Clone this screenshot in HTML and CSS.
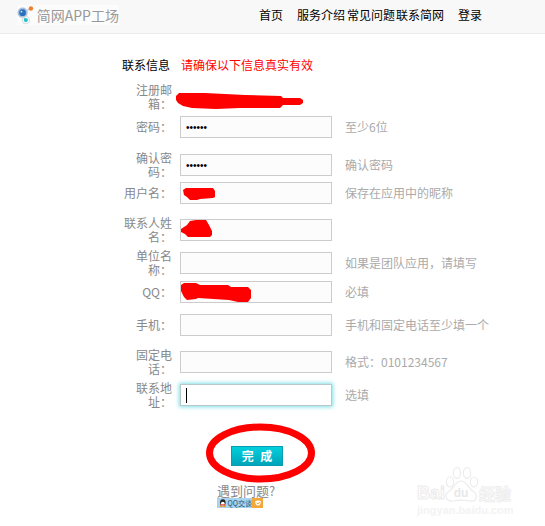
FILE: index.html
```html
<!DOCTYPE html>
<html lang="zh-CN">
<head>
<meta charset="utf-8">
<title>简网APP工场</title>
<link rel="stylesheet" href="styles.css">
</head>
<body>
<header class="topbar">
  <a class="logo">
    <svg class="logo-icon" width="18" height="20" viewBox="0 0 18 20">
      <path d="M6 8 L14 3 M6 9 L9 16" stroke="#c4c8cc" stroke-width="1.2" fill="none"/>
      <circle cx="6" cy="7.5" r="5.5" fill="#a8c0d8"/>
      <circle cx="6" cy="7.5" r="3.6" fill="#2a6fc0"/>
      <circle cx="4.8" cy="6.4" r="1" fill="#cfe2f4"/>
      <circle cx="15" cy="3" r="2.4" fill="#f07f30"/>
      <circle cx="9.5" cy="15.5" r="2.2" fill="#20c4cc"/>
      <circle cx="9.5" cy="15.5" r="4" fill="none" stroke="#d4d8dc"/>
    </svg>
    <span class="logo-text">简网APP工场</span>
  </a>
  <nav class="nav">
    <a class="nav-first">首页</a>
    <a class="nav-group">服务介绍</a>
    <a class="nav-tight">常见问题</a>
    <a class="nav-tight">联系简网</a>
    <a class="nav-last">登录</a>
  </nav>
</header>

<main class="content">
  <div class="heading">
    <span class="heading-title">联系信息</span>
    <span class="heading-note">请确保以下信息真实有效</span>
  </div>

  <form class="form">
    <div class="row">
      <label class="label">注册邮箱<span class="colon">：</span></label>
    </div>
    <div class="row gap-5">
      <label class="label">密码<span class="colon">：</span></label>
      <input class="field field-secret" type="password" value="123456">
      <span class="hint">至少6位</span>
    </div>
    <div class="row gap-13">
      <label class="label">确认密码<span class="colon">：</span></label>
      <input class="field field-secret" type="password" value="123456">
      <span class="hint">确认密码</span>
    </div>
    <div class="row gap-3">
      <label class="label">用户名<span class="colon">：</span></label>
      <input class="field" type="text">
      <span class="hint">保存在应用中的昵称</span>
    </div>
    <div class="row gap-12">
      <label class="label">联系人姓名<span class="colon">：</span></label>
      <input class="field" type="text">
    </div>
    <div class="row gap-5">
      <label class="label">单位名称<span class="colon">：</span></label>
      <input class="field" type="text">
      <span class="hint">如果是团队应用，请填写</span>
    </div>
    <div class="row gap-4">
      <label class="label">QQ<span class="colon">：</span></label>
      <input class="field" type="text">
      <span class="hint">必填</span>
    </div>
    <div class="row gap-11">
      <label class="label">手机<span class="colon">：</span></label>
      <input class="field" type="text">
      <span class="hint">手机和固定电话至少填一个</span>
    </div>
    <div class="row gap-12">
      <label class="label">固定电话<span class="colon">：</span></label>
      <input class="field" type="text">
      <span class="hint">格式<span class="colon">：</span>0101234567</span>
    </div>
    <div class="row gap-5">
      <label class="label">联系地址<span class="colon">：</span></label>
      <div class="field field-focus"><span class="caret"></span></div>
      <span class="hint">选填</span>
    </div>
    <button class="submit" type="button">完 成</button>
  </form>

  <div class="help">
    <div class="help-text">遇到问题?</div>
    <div class="qq-badge">
      <span class="qq-main">
        <svg width="9" height="10" viewBox="0 0 9 10">
          <ellipse cx="4.5" cy="4.5" rx="3.3" ry="4" fill="#222"/>
          <ellipse cx="4.5" cy="6" rx="2.3" ry="2.6" fill="#fff"/>
          <path d="M1 8 L8 8 L7 6.5 L2 6.5Z" fill="#e8402a"/>
          <ellipse cx="2.6" cy="9.2" rx="1.8" ry=".8" fill="#f0a020"/>
          <ellipse cx="6.4" cy="9.2" rx="1.8" ry=".8" fill="#f0a020"/>
        </svg>
        <span class="qq-label">QQ交谈</span>
      </span>
      <span class="qq-side">
        <svg width="8" height="8" viewBox="0 0 8 8"><path d="M1.2 2 Q4 1 6.8 2 L6.4 5 Q4 8 1.6 5Z" fill="#fff"/><path d="M2.6 3.8 L4 5 L5.6 3.2" stroke="#f0a030" fill="none"/></svg>
      </span>
    </div>
  </div>
</main>

<svg class="marks" width="545" height="526" viewBox="0 0 545 526">
  <g fill="#f00">
    <path d="M176 96 L179 93 L205 93 L245 95 L281 96 L283 98 L300 98 L303 100 L303 103 L300 105 L283 105 L280 108 L240 108 L216 109 L192 108 L183 106 L178 103 L176 100Z"/>
    <path d="M183 190 L186 188 L213 188 L215 191 L215 197 L213 198 L200 199 L197 200 L190 200 L187 197 L184 195Z"/>
    <path d="M181 229 L187 225 L190 221 L196 220 L206 220 L209 225 L212 231 L212 235 L210 237 L188 237 L185 234 L181 232Z"/>
    <path d="M181 285 L184 283 L196 283 L200 285 L228 285 L231 287 L248 287 L251 290 L251 298 L248 302 L238 302 L229 300 L198 298 L196 299 L187 300 L184 297 L181 291Z"/>
  </g>
  <ellipse class="circle" cx="260.5" cy="453" rx="51" ry="26"/>
</svg>

<div class="watermark">
  <div class="wm-top">
    <span class="wm-word">Bai</span>
    <svg class="wm-paw" width="36" height="37" viewBox="0 0 36 37">
      <g fill="#fff" stroke="#ececec" stroke-width="1.2">
        <ellipse cx="7" cy="16" rx="3.6" ry="5"/>
        <ellipse cx="14" cy="7" rx="3.6" ry="5.4"/>
        <ellipse cx="24" cy="7" rx="3.6" ry="5.4"/>
        <ellipse cx="31" cy="16" rx="3.6" ry="5"/>
        <path d="M18 15 C12 15 11 23 5 26 C1 29 3 36 10 35 C14 34 22 34 27 35 C34 36 35 29 31 26 C25 23 24 15 18 15Z"/>
      </g>
      <text x="18" y="31" text-anchor="middle" class="wm-du">du</text>
    </svg>
    <span class="wm-word wm-cn">经验</span>
  </div>
  <div class="wm-url">jingyan.baidu.com</div>
</div>
</body>
</html>
```

FILE: styles.css
```css
* { box-sizing: border-box; }

html, body {
  margin: 0;
  padding: 0;
}

body {
  position: relative;
  width: 545px;
  height: 526px;
  overflow: hidden;
  background: #fff;
  font-family: "Noto Sans CJK SC", "Liberation Sans", sans-serif;
  font-size: 12px;
  line-height: 14px;
  color: #000;
}

.topbar {
  display: flex;
  align-items: center;
  height: 34px;
  padding-left: 17px;
  background: #f8f8f8;
  border-bottom: 1px solid #ebebeb;
}

.logo {
  display: flex;
  align-items: center;
  gap: 3px;
  width: 102px;
  height: 20px;
  margin-top: -3px;
  background: #fcfcfc;
}

.logo-text {
  font-size: 14px;
  color: #999;
  white-space: nowrap;
}

.nav {
  display: flex;
  margin-left: 140px;
  margin-top: -3px;
}

.nav-group { margin-left: 14px; }
.nav-tight { margin-left: 2px; margin-right: -1px; }
.nav-last { margin-left: 15px; }

.content {
  padding: 24px 0 0 122px;
}

.heading {
  display: flex;
  gap: 11px;
  height: 14px;
}

.heading-note { color: #f00; }

.form {
  margin-top: 11px;
}

.row {
  display: flex;
  align-items: center;
  min-height: 22px;
}

.row.gap-3 { margin-top: 3px; }
.row.gap-4 { margin-top: 4px; }
.row.gap-5 { margin-top: 5px; }
.row.gap-11 { margin-top: 11px; }
.row.gap-12 { margin-top: 12px; }
.row.gap-13 { margin-top: 13px; }

.label {
  flex: none;
  width: 50px;
  text-align: right;
  color: #888;
}

.colon {
  font-family: "Noto Sans CJK TC", sans-serif;
}

.field {
  flex: none;
  display: block;
  width: 152px;
  height: 22px;
  margin: 0 0 0 8px;
  padding: 0 5px;
  background: #fcfcfc;
  border: 1px solid #ccc;
  border-radius: 0;
  outline: none;
  font-family: "Liberation Sans", sans-serif;
  font-size: 12px;
}

.field-secret {
  font-size: 10px;
}

.field-focus {
  display: flex;
  align-items: center;
  background: #fff;
  border-color: #b8c8cc;
  box-shadow: 0 0 4px 1px #7fdfe6;
}

.caret {
  width: 1px;
  height: 15px;
  background: #000;
}

.hint {
  margin-left: 13px;
  color: #aaa;
  white-space: nowrap;
}

.submit {
  display: block;
  width: 52px;
  height: 20px;
  margin: 37px 0 0 109px;
  padding: 0;
  background: linear-gradient(#00d0dc, #00a4ba);
  border: 1px solid #0a9cb0;
  color: #fff;
  font-family: inherit;
  font-size: 12px;
  font-weight: 700;
  line-height: 18px;
  word-spacing: 4px;
}

.help {
  margin: 18px 0 0 95px;
}

.help-text {
  font-size: 13px;
  line-height: 14px;
  color: #888;
}

.qq-badge {
  display: flex;
  width: 46px;
  height: 10px;
}

.qq-main {
  display: flex;
  align-items: center;
  gap: 1px;
  width: 35px;
  padding-left: 2px;
  background: #a8d4f0;
}

.qq-label {
  font-size: 7px;
  line-height: 10px;
  color: #24506e;
  white-space: nowrap;
}

.qq-side {
  display: flex;
  align-items: center;
  justify-content: center;
  width: 11px;
  background: #f4a83c;
}

.marks {
  position: absolute;
  left: 0;
  top: 0;
  pointer-events: none;
}

.circle {
  fill: none;
  stroke: #f00;
  stroke-width: 7;
}

.watermark {
  position: absolute;
  left: 417px;
  top: 466px;
  width: 98px;
}

.wm-top {
  display: flex;
  align-items: flex-end;
  height: 37px;
}

.wm-word {
  font-family: "Liberation Sans", sans-serif;
  font-size: 18px;
  font-weight: 700;
  line-height: 20px;
  color: #fff;
  -webkit-text-stroke: 1px #ececec;
}

.wm-cn {
  font-family: "Noto Sans CJK SC", sans-serif;
  font-size: 16px;
  -webkit-text-stroke: 1px #eeeeee;
}

.wm-paw { flex: none; margin-left: -2px; }

.wm-du {
  font-family: "Liberation Sans", sans-serif;
  font-size: 12px;
  font-weight: 700;
  fill: #e8e8e8;
  stroke: none;
}

.wm-url {
  font-family: "Liberation Sans", sans-serif;
  font-size: 11px;
  font-weight: 700;
  line-height: 12px;
  margin-top: 1px;
  color: #f3f3f3;
  white-space: nowrap;
}
```
